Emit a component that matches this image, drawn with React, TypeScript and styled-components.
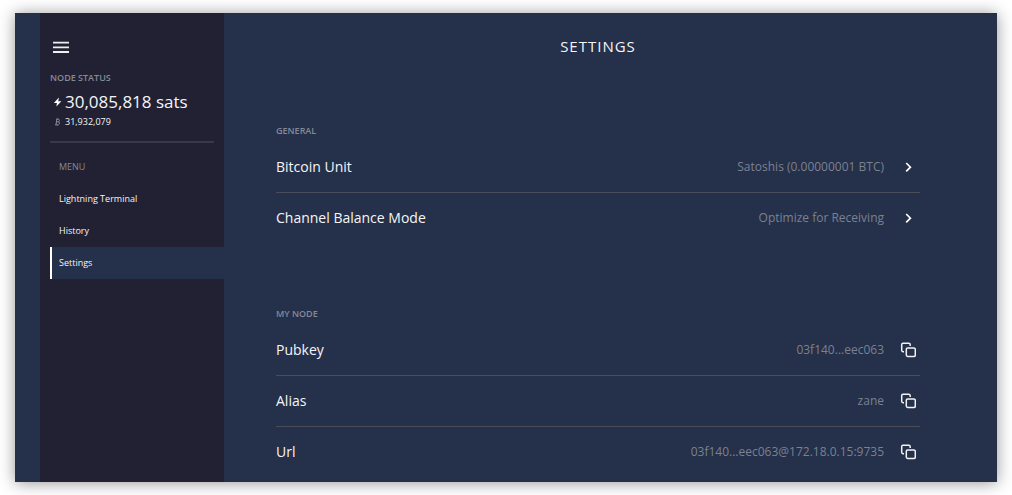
import React from "react";
import styled, { createGlobalStyle } from "styled-components";

const GlobalStyle = createGlobalStyle`
  * {
    box-sizing: border-box;
  }
  body {
    margin: 0;
    background: #ffffff;
    color: #f5f5f7;
    font-family: "Open Sans", "Noto Sans", sans-serif;
  }
  button {
    border: 0;
    padding: 0;
    background: none;
    color: inherit;
    font: inherit;
    cursor: pointer;
  }
`;

const Page = styled.div`
  display: flex;
  min-height: 100vh;
  padding: 13px 15px;
`;

const Frame = styled.div`
  display: flex;
  flex: 1;
  padding: 0 25px;
  background: #25304a;
  box-shadow: 0 1px 15px rgba(0, 0, 0, 0.42);
`;

const Sidebar = styled.aside`
  flex: none;
  width: 184px;
  padding: 24px 0 0 10px;
  background: #212133;
`;

const MenuButton = styled.button`
  display: flex;
  align-items: center;
  justify-content: center;
  width: 22px;
  height: 20px;
`;

const NodeStatus = styled.section`
  margin: 13px 10px 0 0;
  padding-bottom: 14px;
  border-bottom: 2px solid #3a3847;
`;

const Caption = styled.h2<{ $indent?: number; $strong?: boolean }>`
  margin: 0;
  padding-left: ${({ $indent = 0 }) => $indent}px;
  color: #848a99;
  font-size: 9px;
  font-weight: ${({ $strong }) => ($strong ? 600 : 400)};
  line-height: 16px;
`;

const Balance = styled.div<{ $large?: boolean }>`
  display: flex;
  align-items: center;
  font-size: ${({ $large }) => ($large ? 17 : 9)}px;
  line-height: ${({ $large }) => ($large ? 31 : 8)}px;
`;

const BalanceIcon = styled.svg`
  flex: none;
  width: 15px;
  height: 10px;
`;

const Nav = styled.nav`
  padding-top: 16px;
`;

const NavList = styled.ul`
  margin: 8px 0 0;
  padding: 0;
  list-style: none;
`;

const NavLink = styled.a<{ $active?: boolean }>`
  display: block;
  padding-left: 7px;
  border-left: 2px solid ${({ $active }) => ($active ? "#ffffff" : "transparent")};
  background: ${({ $active }) => ($active ? "#25304a" : "transparent")};
  color: inherit;
  font-size: 9px;
  line-height: 32px;
  text-decoration: none;
`;

const Main = styled.main`
  flex: 1;
  min-width: 0;
  padding: 23px 52px 0;
`;

const Title = styled.h1`
  margin: 0 0 67px;
  font-size: 15px;
  font-weight: 400;
  letter-spacing: 1px;
  line-height: 20px;
  text-align: center;
`;

const Section = styled.section`
  & + & {
    margin-top: 62px;
  }
`;

const SettingList = styled.div`
  margin-top: 3px;
`;

const Row = styled.div`
  display: flex;
  align-items: center;
  height: 51px;
  border-bottom: 1px solid #4a4c59;

  &:last-child {
    border-bottom-color: transparent;
  }
`;

const RowLabel = styled.span`
  flex: 1;
  font-size: 14px;
  line-height: 20px;
`;

const RowValue = styled.span`
  color: #7b8191;
  font-size: 12px;
  line-height: 20px;
`;

const RowAction = styled.button`
  display: flex;
  align-items: center;
  justify-content: center;
  width: 24px;
  height: 24px;
  margin-left: 12px;
`;

const MenuIcon = () => (
  <svg width="16" height="12" viewBox="0 0 16 12" fill="none" stroke="#eeeeee" strokeWidth="1.8" aria-hidden="true">
    <path d="M0 1.6H16M0 6.3H16M0 11H16" />
  </svg>
);

const BoltIcon = () => (
  <BalanceIcon viewBox="0 0 15 10" aria-hidden="true">
    <path d="M8.9 0.6 3.9 5.9H6.9L6.4 9.4 11.4 4.2H8.3Z" fill="#ffffff" />
  </BalanceIcon>
);

const BitcoinIcon = () => (
  <BalanceIcon viewBox="0 0 15 10" fill="none" stroke="#8a8a96" aria-hidden="true">
    <path d="M6 2.2H8.2C10 2.2 9.9 4.8 8.1 4.8H6.4M8 4.8C10.1 4.8 9.9 7.8 7.8 7.8H5M6.8 2.2 6 7.8M7.8 1.4V2.2M7.2 7.8V8.6" />
  </BalanceIcon>
);

const ChevronIcon = () => (
  <svg width="8" height="10" viewBox="0 0 8 10" fill="none" stroke="#ffffff" strokeWidth="1.7" aria-hidden="true">
    <path d="M2.2 1 6.4 5.2 2.2 9.4" />
  </svg>
);

const CopyIcon = () => (
  <svg width="16" height="16" viewBox="0 0 16 16" fill="none" stroke="#f2f2f4" strokeWidth="1.5" aria-hidden="true">
    <rect x="6.3" y="5.9" width="9" height="8.6" rx="1.4" />
    <path d="M4 9.7H3C2.1 9.7 1.7 9.2 1.7 8.3V2.7C1.7 1.8 2.1 1.3 3 1.3H8.8C9.7 1.3 10.2 1.8 10.2 2.7V4" />
  </svg>
);

type Setting = { label: string; value: string; action: "open" | "copy" };

const sections: { title: string; settings: Setting[] }[] = [
  {
    title: "GENERAL",
    settings: [
      { label: "Bitcoin Unit", value: "Satoshis (0.00000001 BTC)", action: "open" },
      { label: "Channel Balance Mode", value: "Optimize for Receiving", action: "open" },
    ],
  },
  {
    title: "MY NODE",
    settings: [
      { label: "Pubkey", value: "03f140...eec063", action: "copy" },
      { label: "Alias", value: "zane", action: "copy" },
      { label: "Url", value: "03f140...eec063@172.18.0.15:9735", action: "copy" },
    ],
  },
];

const navItems = ["Lightning Terminal", "History", "Settings"];

export default function App() {
  return (
    <>
      <GlobalStyle />
      <Page>
        <Frame>
          <Sidebar>
            <MenuButton aria-label="Toggle menu">
              <MenuIcon />
            </MenuButton>
            <NodeStatus>
              <Caption $strong>NODE STATUS</Caption>
              <Balance $large>
                <BoltIcon />
                30,085,818 sats
              </Balance>
              <Balance>
                <BitcoinIcon />
                31,932,079
              </Balance>
            </NodeStatus>
            <Nav>
              <Caption $indent={9}>MENU</Caption>
              <NavList>
                {navItems.map((item) => (
                  <li key={item}>
                    <NavLink
                      href="#"
                      $active={item === "Settings"}
                      aria-current={item === "Settings" ? "page" : undefined}
                    >
                      {item}
                    </NavLink>
                  </li>
                ))}
              </NavList>
            </Nav>
          </Sidebar>
          <Main>
            <Title>SETTINGS</Title>
            {sections.map(({ title, settings }) => (
              <Section key={title}>
                <Caption $strong>{title}</Caption>
                <SettingList>
                  {settings.map(({ label, value, action }) => (
                    <Row key={label}>
                      <RowLabel>{label}</RowLabel>
                      <RowValue>{value}</RowValue>
                      <RowAction aria-label={`${action === "open" ? "Change" : "Copy"} ${label}`}>
                        {action === "open" ? <ChevronIcon /> : <CopyIcon />}
                      </RowAction>
                    </Row>
                  ))}
                </SettingList>
              </Section>
            ))}
          </Main>
        </Frame>
      </Page>
    </>
  );
}
